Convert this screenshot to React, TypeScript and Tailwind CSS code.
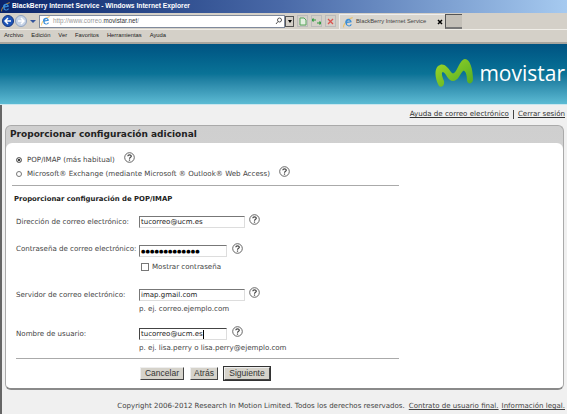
import React from "react";

const IEIcon = ({ s = 13 }: { s?: number }) => (
  <svg width={s} height={s} viewBox="0 0 16 16" className="shrink-0">
    <path d="M1 15 C0 12 5 3 14 1" fill="none" stroke="#f2b632" strokeWidth="1.2" />
    <path d="M3.5 9 A4.7 4.7 0 1 1 12.6 7.6 L6 8.6 A2.6 2.6 0 0 0 11 10.4 L13 10.8 A5 5 0 0 1 3.5 9Z M6 6.8 L10.4 6.2 A2.4 2.4 0 0 0 6 6.8Z" fill="#3c8fd8" fillRule="evenodd" />
  </svg>
);

const Help = () => (
  <svg width="11" height="11" viewBox="0 0 11 11" className="shrink-0">
    <circle cx="5.5" cy="5.5" r="4.8" fill="#fff" stroke="#555" strokeWidth="0.9" />
    <path d="M3.800 4.200 C3.800 2.400 7.300 2.400 7.300 4.200 C7.300 5.300 5.500 5.200 5.500 6.700" fill="none" stroke="#444" strokeWidth="1.200" />
    <rect x="4.900" y="7.500" width="1.200" height="1.200" fill="#444" />
  </svg>
);

const Field = ({ label, value, w, mt, hint, extra, active, pw, labelUp }: { label: string; value: string; w: string; mt: string; hint?: string; extra?: boolean; active?: boolean; pw?: boolean; labelUp?: boolean }) => (
  <div className={`flex ${mt}`}>
    <div className={`w-[125px] pl-[2px] ${labelUp ? "-mt-[2px]" : ""} text-[7.1px] leading-[12px] whitespace-nowrap shrink-0 text-[#444]`}>{label}</div>
    <div>
      <div className="flex items-start">
        <div className={`${w} h-[12px] bg-white border-t border-l ${active ? "border-[#444]" : "border-[#777]"} border-r border-r-[#ddd] border-b border-b-[#ddd] pl-[1px] text-[7px] leading-[10px] text-[#222] flex items-center whitespace-nowrap overflow-hidden`}>
          {pw ? <span className="text-[5px] tracking-[0.15px] text-black">{value}</span> : value}
          {active && <span className="w-px h-[9px] bg-black" />}
        </div>
        <div className={`-mt-[2px] ${pw || active ? "ml-[5px]" : "ml-[4px]"}`}><Help /></div>
      </div>
      {extra && (
        <div className="flex items-center gap-[3px] mt-[5px] ml-[2px]">
          <span className="w-[8px] h-[8px] bg-white border border-[#777]" />
          <span className="text-[7.1px] leading-[10px] text-[#444]">Mostrar contraseña</span>
        </div>
      )}
      {hint && <div className="text-[7.1px] leading-[10px] mt-[3px] text-[#444]">{hint}</div>}
    </div>
  </div>
);

const Btn = ({ children, w, dark }: { children: React.ReactNode; w: string; dark?: boolean }) => (
  <div className={`${w} h-[13px] flex items-center justify-center bg-[#d6d3cb] border border-[#eee] border-r-[#444] border-b-[#444] ${dark ? "outline outline-1 outline-[#333]" : ""} text-[8.5px] leading-none text-[#333] [font-family:'Liberation_Sans',sans-serif]`}>
    {children}
  </div>
);

export default function App() {
  return (
    <div className="w-[567px] h-[414px] overflow-hidden flex flex-col bg-[#f0f0f0] [font-family:'DejaVu_Sans',sans-serif]">
      <div className="h-[13px] flex items-center gap-[1px] pl-[1px] bg-gradient-to-r from-[#0a246a] via-[#4a6aa8] to-[#a6caf0] text-white text-[6.7px] font-bold leading-none shrink-0 [font-family:'Liberation_Sans',sans-serif]">
        <IEIcon s={10} />
        <span>BlackBerry Internet Service - Windows Internet Explorer</span>
      </div>

      <div className="h-[16px] bg-[#d4d0c8] flex items-center shrink-0 pl-[2px]">
        <div className="w-[12px] h-[12px] rounded-full bg-[#1f55b8] border border-[#14357e] flex items-center justify-center">
          <svg width="8" height="8" viewBox="0 0 8 8"><path d="M4 1 L1 4 L4 7 M1 4 H7" stroke="#fff" strokeWidth="1.5" fill="none" /></svg>
        </div>
        <div className="w-[12px] h-[12px] rounded-full bg-[#c6d3e6] border border-[#8fa2c0] ml-[1px] flex items-center justify-center">
          <svg width="8" height="8" viewBox="0 0 8 8"><path d="M4 1 L7 4 L4 7 M7 4 H1" stroke="#fff" strokeWidth="1.5" fill="none" /></svg>
        </div>
        <span className="w-0 h-0 ml-[3px] border-x-[3px] border-x-transparent border-t-[3px] border-t-[#33549b]" />
        <div className="ml-[3px] w-[246px] h-[13px] bg-white border border-[#7f8a9c] flex items-center pl-[1px] gap-[2px] text-[6.3px] leading-none text-[#999] [font-family:'Liberation_Sans',sans-serif]">
          <IEIcon s={10} />
          <span>http://www.correo.<span className="text-[#333]">movistar.net</span>/</span>
          <svg className="ml-auto mr-[1px]" width="8" height="8" viewBox="0 0 8 8"><circle cx="4.5" cy="3" r="2" stroke="#555" fill="none" /><path d="M3 4.5 L1 7" stroke="#555" /></svg>
        </div>
        <div className="w-[9px] h-[11px] bg-[#d4d0c8] border border-[#555] flex items-center justify-center">
          <span className="w-0 h-0 border-x-[2px] border-x-transparent border-t-[3px] border-t-black" />
        </div>
        <div className="ml-[3px] w-[11px] h-[12px] border border-[#bbb] flex items-center justify-center">
          <svg width="8" height="9" viewBox="0 0 8 9"><path d="M1 1 H5 L7 3 V8 H1Z" fill="#e3efe0" stroke="#56a55d" /></svg>
        </div>
        <div className="ml-[3px] w-[11px] h-[12px] border border-[#bbb] flex items-center justify-center">
          <svg width="9" height="7" viewBox="0 0 9 7"><path d="M0 2 H4 M1.5 0.5 L0 2 L1.5 3.500 M9 5 H5 M7.500 3.500 L9 5 L7.500 6.500" stroke="#2f9b3d" strokeWidth="1.1" fill="none" /></svg>
        </div>
        <div className="ml-[3px] w-[11px] h-[12px] border border-[#bbb] flex items-center justify-center">
          <svg width="7" height="7" viewBox="0 0 7 7"><path d="M1 1 L6 6 M6 1 L1 6" stroke="#d9534f" strokeWidth="1.3" /></svg>
        </div>
        <div className="ml-[3px] w-[106px] h-[15px] self-end flex items-center pl-[3px] gap-[2px] bg-[#d9d6cf] border-t border-l border-[#eee] text-[5.8px] leading-none text-[#444] whitespace-nowrap [font-family:'Liberation_Sans',sans-serif]">
          <IEIcon s={11} />
          <span>BlackBerry Internet Service</span>
          <svg className="ml-auto mr-[2px]" width="6" height="6" viewBox="0 0 6 6"><path d="M1 1 L5 5 M5 1 L1 5" stroke="#000" strokeWidth="1.5" /></svg>
        </div>
        <div className="w-[17px] h-[15px] self-end bg-[#c4c0b8] border-l border-t border-[#555] border-r-[#777] border-b-2 border-b-[#777]" />
      </div>

      <div className="h-[13px] bg-[#d4d0c8] border-t border-[#f0eee8] flex items-center gap-[8px] pl-[4px] text-[5.8px] leading-none text-[#222] shrink-0 [font-family:'Liberation_Sans',sans-serif]">
        <span>Archivo</span><span>Edición</span><span>Ver</span><span>Favoritos</span><span>Herramientas</span><span>Ayuda</span>
      </div>

      <div className="h-[62px] border-t-2 border-[#a8a59e] bg-gradient-to-b from-[#005382] via-[#0a7397] to-[#5cbbd4] flex items-start justify-end pt-[15px] pr-[2px] shrink-0">
        <svg width="40" height="28" viewBox="0 0 40 28" className="mr-[5px]">
          <defs>
            <linearGradient id="g" x1="0" y1="0" x2="1" y2="1">
              <stop offset="0" stopColor="#a0d82a" /><stop offset="1" stopColor="#4faa22" />
            </linearGradient>
          </defs>
          <path d="M5 27 C1 20 0 11 4 7 C9 3 13 7 17 13 C19 16 21 14 23 10 C25 6 28 0 31 0 C36 0 39 10 39 21 C38 26 33 25 33 21 C33 15 31 11 29 12 C26 15 24 22 19 22 C14 22 12 14 9 13 C7 13 8 18 10 22 C11 27 7 29 5 27Z" fill="url(#g)" />
        </svg>
        <span className="text-white text-[21px] leading-[28px] font-medium [font-family:'Open_Sans',sans-serif]">movistar</span>
      </div>
      <div className="h-[1px] bg-[#c9e6ee] shrink-0" />

      <div className="border-l-2 border-[#666] flex-1 flex flex-col min-h-0">
        <div className="h-[18px] flex items-center justify-end pr-[2px] text-[7.1px] leading-none text-[#333] shrink-0">
          <span className="underline">Ayuda de correo electrónico</span>
          <span className="w-px h-[9px] bg-[#444] mx-[4px]" />
          <span className="underline">Cerrar sesión</span>
        </div>

        <div className="ml-[3px] mt-[2px] w-[559px] h-[265px] rounded-[6px] bg-gradient-to-b from-[#cfcfcf] to-[#dcdcdc] border border-b-2 border-[#aaa] border-b-[#8a8a8a] flex flex-col shrink-0 overflow-hidden">
          <div className="h-[17px] pl-[4px] flex items-center text-[9px] font-bold leading-none text-[#222] shrink-0">
            Proporcionar configuración adicional
          </div>
          <div className="flex-1 bg-white rounded-t-[6px] pl-[8px] pr-[164px] pt-[12px] flex flex-col">
            <div className="flex items-center text-[7.1px] leading-[10px] text-[#444]">
              <span className="w-[6px] h-[6px] rounded-full border border-[#777] bg-black mr-[5px] ml-[2px] shadow-[inset_0_0_0_1px_white]" />
              POP/IMAP (más habitual)
              <span className="ml-[9px] -mt-[6px]"><Help /></span>
            </div>
            <div className="flex items-center text-[7.1px] leading-[10px] text-[#444] mt-[4px]">
              <span className="w-[6px] h-[6px] rounded-full border border-[#777] bg-white mr-[5px] ml-[2px]" />
              Microsoft® Exchange (mediante Microsoft ® Outlook® Web Access)
              <span className="ml-[9px] -mt-[6px]"><Help /></span>
            </div>
            <div className="h-px bg-[#aaa] mt-[6px] -ml-[2px]" />
            <div className="text-[6.9px] font-bold leading-[10px] text-[#222] mt-[8px]">Proporcionar configuración de POP/IMAP</div>
            <Field label="Dirección de correo electrónico:" value="tucorreo@ucm.es" w="w-[106px]" mt="mt-[12px]" />
            <Field label="Contraseña de correo electrónico:" value="●●●●●●●●●●●●●" w="w-[88px]" mt="mt-[17px]" extra pw labelUp />
            <Field label="Servidor de correo electrónico:" value="imap.gmail.com" w="w-[106px]" mt="mt-[17px]" hint="p. ej. correo.ejemplo.com" />
            <Field label="Nombre de usuario:" value="tucorreo@ucm.es" w="w-[88px]" mt="mt-[14px]" hint="p. ej. lisa.perry o lisa.perry@ejemplo.com" active />
            <div className="h-px bg-[#aaa] mt-[5px] ml-[2px]" />
            <div className="flex gap-[6px] ml-[126px] mt-[8px]">
              <Btn w="w-[44px]">Cancelar</Btn>
              <Btn w="w-[28px]">Atrás</Btn>
              <Btn w="w-[46px]" dark>Siguiente</Btn>
            </div>
          </div>
        </div>

        <div className="flex-1 flex items-start justify-end pr-[2px] pt-[11px] text-[7.05px] leading-[10px] text-[#444] whitespace-nowrap">
          <span>Copyright 2006-2012 Research In Motion Limited. Todos los derechos reservados.</span>
          <span className="underline ml-[4px]">Contrato de usuario final.</span>
          <span className="underline ml-[3px]">Información legal.</span>
        </div>
      </div>
    </div>
  );
}
